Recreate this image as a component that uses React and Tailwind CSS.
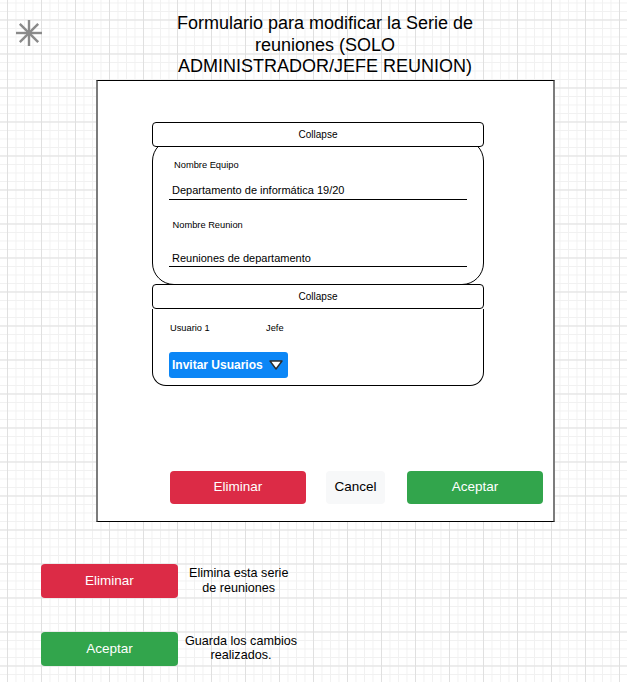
import React from 'react';

const Asterisk = () => (
  <svg width="28" height="28" viewBox="0 0 28 28" className="block">
    <g stroke="#8a8a8a" strokeWidth="2.4" strokeLinecap="butt">
      <line x1="14" y1="1" x2="14" y2="27" />
      <line x1="1" y1="14" x2="27" y2="14" />
      <line x1="4.8" y1="4.8" x2="23.2" y2="23.2" />
      <line x1="23.2" y1="4.8" x2="4.8" y2="23.2" />
    </g>
  </svg>
);

const Caret = () => (
  <svg width="14" height="10" viewBox="0 0 14 10" className="block">
    <polygon points="1,1 13,1 7,9" fill="#ffffff" stroke="#2b2b2b" strokeWidth="1.4" strokeLinejoin="round" />
  </svg>
);

const CollapseHeader = ({ className = '' }) => (
  <div className={`relative z-10 flex h-[25px] items-center justify-center rounded-[4px] border border-black bg-white text-[10px] text-black ${className}`}>
    Collapse
  </div>
);

const Field = ({ label, value, labelPad, gap }) => (
  <div className="flex flex-col">
    <div className={`h-[11px] text-[9.3px] leading-[11px] ${labelPad}`}>{label}</div>
    <div className={`${gap} h-[13px] pl-[3px] text-[11px] leading-[13px]`}>{value}</div>
    <div className="mt-[1.5px] h-px w-[298px] bg-black" />
  </div>
);

export default function App() {
  return (
    <div className="relative h-[682px] w-[627px] overflow-hidden bg-white bg-[linear-gradient(to_right,#e0e0e0_1px,transparent_1px),linear-gradient(to_bottom,#e0e0e0_1px,transparent_1px),linear-gradient(to_right,#f1f1f1_1px,transparent_1px),linear-gradient(to_bottom,#f1f1f1_1px,transparent_1px)] bg-[length:34px_34px,34px_34px,8.5px_8.5px,8.5px_8.5px] bg-[position:7px_19.5px] font-['Liberation_Sans',Arial,sans-serif] text-black">
      {/* top row */}
      <div className="flex">
        <div className="ml-[15px] mt-[19px]">
          <Asterisk />
        </div>
        <div className="ml-[132px] mt-[13px] w-[300px] whitespace-nowrap text-center text-[18px] leading-[21.5px]">
          Formulario para modificar la Serie de
          <br />
          reuniones (SOLO
          <br />
          ADMINISTRADOR/JEFE REUNION)
        </div>
      </div>

      {/* main frame */}
      <div className="ml-[96px] mt-[2.5px] flex h-[442px] w-[459px] flex-col border-x-2 border-y border-x-[#7c7c7c] border-y-black bg-white">
        <div className="ml-[54px] mt-[41px] flex w-[332px] flex-col">
          <CollapseHeader />
          <div className="-mt-[8px] h-[146px] rounded-[22px] border border-black bg-white pl-[16px] pt-[19.5px]">
            <Field label="Nombre Equipo" value="Departamento de informática 19/20" labelPad="pl-[5px]" gap="mt-[13.5px]" />
            <div className="mt-[20px]">
              <Field label="Nombre Reunion" value="Reuniones de departamento" labelPad="pl-[3.5px]" gap="mt-[21px]" />
            </div>
          </div>
          <CollapseHeader className="-mt-px" />
          <div className="h-[77px] rounded-b-[14px] border-x border-b border-black bg-white pl-[16px]">
            <div className="ml-px mt-[14px] flex h-[11px] text-[9.3px] leading-[11px]">
              <span className="w-[96px]">Usuario 1</span>
              <span>Jefe</span>
            </div>
            <button className="mt-[18px] flex h-[26px] w-[119px] items-center gap-[6px] rounded-[3px] bg-[#0b86f6] pl-[3px] text-[12px] font-bold text-white">
              <span>Invitar Usuarios</span>
              <Caret />
            </button>
          </div>
        </div>

        <div className="ml-[72px] mt-[84.5px] flex items-center">
          <button className="h-[33.5px] w-[136px] rounded-[4px] bg-[#dc2b46] text-[13.5px] text-white">Eliminar</button>
          <button className="ml-[20px] h-[33.5px] w-[59px] rounded-[4px] bg-[#f7f8f9] text-[13.5px] text-black">Cancel</button>
          <button className="ml-[22px] h-[33.5px] w-[136px] rounded-[4px] bg-[#32a54c] text-[13.5px] text-white">Aceptar</button>
        </div>
      </div>

      {/* legend */}
      <div className="ml-[41px] mt-[42px] flex items-start">
        <button className="h-[33.5px] w-[137px] rounded-[4px] bg-[#dc2b46] text-[13.5px] text-white">Eliminar</button>
        <div className="ml-[11px] mt-[2px] text-center text-[12.6px] leading-[15px]">
          Elimina esta serie
          <br />
          de reuniones
        </div>
      </div>
      <div className="ml-[41px] mt-[34.5px] flex items-start">
        <button className="h-[33.5px] w-[137px] rounded-[4px] bg-[#32a54c] text-[13.5px] text-white">Aceptar</button>
        <div className="ml-[7px] mt-[2px] text-center text-[12.6px] leading-[14px]">
          Guarda los cambios
          <br />
          realizados.
        </div>
      </div>
    </div>
  );
}
